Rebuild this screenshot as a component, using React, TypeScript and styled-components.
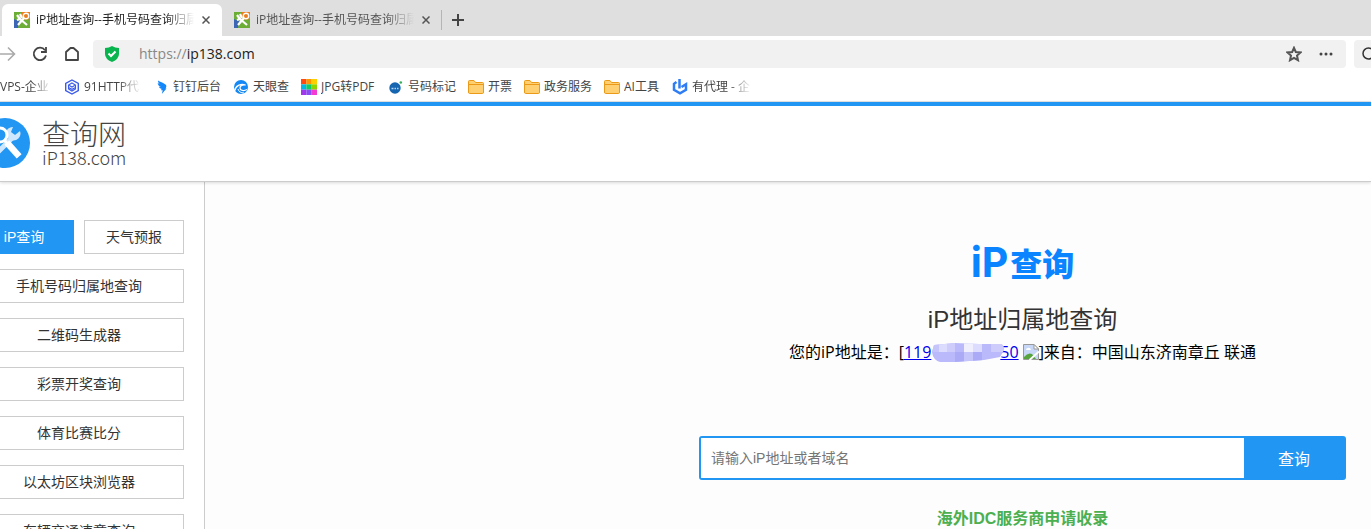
import React from 'react';
import styled, { createGlobalStyle } from 'styled-components';

const GlobalStyle = createGlobalStyle`
  *, *::before, *::after { box-sizing: border-box; }
  body {
    margin: 0;
    background: #fff;
    color: #333;
    font-family: "Open Sans", "Noto Sans CJK SC", sans-serif;
    font-size: 14px;
  }
  button, input { font-family: inherit; }
  button { border: 0; padding: 0; background: none; cursor: pointer; }
  svg { display: block; flex: none; }
`;

const Shell = styled.div`
  display: flex;
  flex-direction: column;
  height: 100vh;
  overflow: hidden;
`;

/* Browser frame */

const TabBar = styled.div`
  display: flex;
  align-items: flex-end;
  height: 36px;
  padding-left: 2px;
  background: #dfdfdf;
`;

const Tab = styled.div<{ $active?: boolean }>`
  display: flex;
  align-items: center;
  width: 220px;
  height: 32px;
  padding: 0 8px 0 12px;
  border-radius: 6px 6px 0 0;
  background: ${(p) => (p.$active ? '#fff' : 'transparent')};
  color: ${(p) => (p.$active ? '#222' : '#555')};
`;

const TabTitle = styled.span`
  flex: 1;
  margin-left: 6px;
  overflow: hidden;
  white-space: nowrap;
  font-size: 12px;
  line-height: 20px;
  mask-image: linear-gradient(to right, #000 82%, transparent);
`;

const TabClose = styled.button`
  display: grid;
  place-items: center;
  width: 16px;
  height: 16px;
  margin-left: 4px;
`;

const NewTab = styled.button`
  display: grid;
  place-items: center;
  width: 32px;
  height: 20px;
  margin: 0 0 6px -1px;
  border-left: 1px solid #b5b5b5;
`;

const NavBar = styled.div`
  display: flex;
  align-items: center;
  height: 36px;
  overflow: hidden;
`;

const NavButton = styled.button`
  display: grid;
  place-items: center;
  width: 32px;
  height: 32px;
  flex: none;
`;

const NavButtons = styled.div`
  display: flex;
  width: 93px;
  padding-right: 5px;
  justify-content: flex-end;
  flex: none;
`;

const AddressBox = styled.div`
  display: flex;
  flex: 1;
  align-items: center;
  height: 28px;
  padding: 0 4px 0 11px;
  border-radius: 4px;
  background: #f1f1f1;
`;

const Address = styled.div`
  flex: 1;
  margin-left: 19px;
  color: #222;
  font-size: 14px;
  line-height: 20px;
`;

const Scheme = styled.span`
  color: #888;
`;

const SearchStub = styled.div`
  display: flex;
  align-items: center;
  width: 17px;
  height: 28px;
  margin-left: 8px;
  padding-left: 8px;
  border-radius: 4px 0 0 4px;
  background: #f1f1f1;
  overflow: hidden;
`;

const Bookmarks = styled.nav`
  display: flex;
  align-items: center;
  gap: 12px;
  height: 30px;
  border-bottom: 1px solid #e3e3e3;
`;

const Bookmark = styled.a`
  display: flex;
  align-items: center;
  gap: 4px;
  color: #444;
  font-size: 12px;
  line-height: 20px;
  text-decoration: none;
`;

const BookmarkLabel = styled.span<{ $width: number; $fade?: boolean }>`
  width: ${(p) => p.$width}px;
  overflow: hidden;
  white-space: nowrap;
  ${(p) => p.$fade && 'mask-image: linear-gradient(to right, #000 60%, transparent);'}
`;

/* Site */

const SiteHeader = styled.header`
  position: relative;
  display: flex;
  align-items: center;
  flex: none;
  height: 80px;
  padding-bottom: 2px;
  border-top: 4px solid #2196f3;
  border-bottom: 1px solid #ccc;
  box-shadow: 0 1px 3px rgba(0, 0, 0, 0.14);
  background: #fff;
`;

const Brand = styled.a`
  display: flex;
  align-items: center;
  gap: 11px;
  margin-left: -20px;
  color: #444;
  text-decoration: none;
  font-family: "Noto Sans CJK SC", sans-serif;
  font-weight: 300;
`;

const BrandText = styled.span`
  display: flex;
  flex-direction: column;
`;

const BrandName = styled.span`
  font-size: 28px;
  line-height: 28px;
`;

const BrandDomain = styled.span`
  font-size: 18px;
  line-height: 20px;
`;

const Body = styled.div`
  display: flex;
  flex: 1;
  min-height: 0;
`;

const Sidebar = styled.aside`
  display: flex;
  justify-content: flex-end;
  flex: none;
  width: 205px;
  padding: 38px 20px 0 0;
  border-right: 1px solid #ccc;
  overflow: hidden;
`;

const Menu = styled.nav`
  display: grid;
  grid-template-columns: 100px 100px;
  grid-auto-rows: 34px;
  gap: 15px 10px;
  flex: none;
`;

const MenuLink = styled.a<{ $wide?: boolean; $active?: boolean }>`
  grid-column: ${(p) => (p.$wide ? 'span 2' : 'auto')};
  border: 1px solid ${(p) => (p.$active ? '#2196f3' : '#ccc')};
  background: ${(p) => (p.$active ? '#2196f3' : '#fff')};
  color: ${(p) => (p.$active ? '#fff' : '#333')};
  font-family: "Liberation Sans", "Noto Sans CJK SC", sans-serif;
  font-size: 14px;
  line-height: 32px;
  text-align: center;
  text-decoration: none;
`;

const Main = styled.main`
  display: flex;
  justify-content: flex-end;
  flex: 1;
  padding: 60px 25px 0;
  background: #fdfdfd;
`;

const Lookup = styled.section`
  display: flex;
  flex-direction: column;
  align-items: center;
  width: 647px;
`;

const Wordmark = styled.div`
  display: flex;
  align-items: center;
  gap: 2px;
  height: 40px;
  color: #0a84ff;
  font-family: Inter, Roboto, sans-serif;
  font-size: 41px;
  font-weight: 700;
  line-height: 40px;
`;

const WordmarkHan = styled.span`
  font-family: "Noto Sans CJK SC", sans-serif;
  font-size: 32px;
  font-weight: 900;
  line-height: 38px;
`;

const Title = styled.h1`
  margin: 22px 0 4px;
  font-family: "Liberation Sans", "Noto Sans CJK SC", sans-serif;
  font-size: 24px;
  font-weight: 400;
  line-height: 32px;
`;

const Result = styled.p`
  display: flex;
  align-items: center;
  margin: 0;
  color: #000;
  font-size: 16px;
  line-height: 24px;
  white-space: pre;
`;

const IpLink = styled.a`
  position: relative;
  display: flex;
  margin-right: 4px;
  color: #00e;
  text-decoration: underline;
`;

const HiddenDigits = styled.span`
  width: 69px;
`;

const Mosaic = styled.svg`
  position: absolute;
  left: 27px;
  top: 3px;
`;

const SearchForm = styled.form`
  display: flex;
  flex: none;
  width: 100%;
  height: 44px;
  margin: 72px 0 27px;
  border: 2px solid #2196f3;
  border-radius: 3px;
  background: #2196f3;
`;

const SearchInput = styled.input`
  flex: 1;
  min-width: 0;
  padding: 0 10px;
  border: 0;
  outline: 0;
  background: #fff;
  font-family: "Liberation Sans", "Noto Sans CJK SC", sans-serif;
  font-size: 14px;
  &::placeholder { color: #757575; opacity: 1; }
`;

const SearchButton = styled.button`
  width: 100px;
  color: #fff;
  font-size: 16px;
`;

const Notice = styled.a`
  color: #4caf50;
  font-family: "Liberation Sans", "Noto Sans CJK SC", sans-serif;
  font-size: 16px;
  font-weight: 700;
  line-height: 24px;
  text-decoration: none;
`;

/* Icons */

const SiteIcon = () => (
  <svg width="16" height="16" viewBox="0 0 16 16">
    <path d="M0 0h16v16H0z" fill="#6cae35" />
    <path d="M0 7l5 2-1 7H0z" fill="#3d65b5" />
    <path d="M8 0h8v7l-5 1-4-4z" fill="#ec7d1c" />
    <circle cx="12" cy="4" r="2.7" fill="#ec7d1c" stroke="#fff" strokeWidth="1.4" />
    <path d="M3 3l3 4-3 1M6 7l7 6M10 6l-6 7M6 2l2 4" stroke="#fff" strokeWidth="2.2" fill="none" />
  </svg>
);

const CloseIcon = () => (
  <svg width="8" height="8" viewBox="0 0 8 8" stroke="#555" strokeWidth="1.5">
    <path d="M.5.5l7 7M7.500.5l-7 7" />
  </svg>
);

const Folder = () => (
  <svg width="16" height="16" viewBox="0 0 16 16" fill="#ffd071" stroke="#eb9a17">
    <path d="M.5 13V2.500Q.5 1.500 1.500 1.500H6l1.500 2h7q1 0 1 1V13q0 1.500-1 1.500h-13q-1 0-1-1.500z" />
    <path d="M1 5.500h14" />
  </svg>
);

const HexIcon = () => (
  <svg width="16" height="16" viewBox="0 0 16 16" fill="none" stroke="#3b5bea">
    <path d="M8 1l6.300 3.500v7L8 15l-6.300-3.500v-7z" strokeWidth="1.400" />
    <path d="M8 4l3.500 2v4L8 12l-3.500-2V6zM4.500 6L8 8l3.500-2M4.500 8.500L8 10.300l3.500-1.800" strokeWidth="1.100" />
  </svg>
);

const WingIcon = () => (
  <svg width="16" height="16" viewBox="0 0 16 16" fill="#1487fa">
    <path d="M5 1.500c2 1.300 5 2.200 7.500 4 1.500 1.200.8 2.500 0 4h1L8.800 15l.9-3.700H8l.6-1.500C7 9.500 6.300 8.800 6 7.800l2 .3C5.500 7 4.800 5.500 4.700 4l2 .9C5.500 4 5 3 5 1.500z" />
  </svg>
);

const EyeIcon = () => (
  <svg width="16" height="16" viewBox="0 0 16 16">
    <circle cx="8" cy="8" r="7" fill="#1488f5" />
    <path d="M1.500 12c1-5 6-8 11-6-4-.3-5.500 1-5.500 3 0 2.500 3.500 3.500 7 1.500" fill="none" stroke="#fff" strokeWidth="1.300" />
    <path d="M5 10c.5 2.500 3 4 6 4" fill="none" stroke="#fff" />
  </svg>
);

const PaletteIcon = () => {
  const colours = ['#ff4b12', '#ff9500', '#ffd000', '#00b8e6', '#10cc62', '#8ed500', '#a038ec', '#8a4cf5', '#f33bd3'];
  return (
    <svg width="16" height="16" viewBox="0 0 15 15">
      {colours.map((c, i) => (
        <rect key={c} x={(i % 3) * 5} y={Math.floor(i / 3) * 5} width="5" height="5" fill={c} />
      ))}
    </svg>
  );
};

const MarkIcon = () => (
  <svg width="16" height="16" viewBox="0 0 16 16">
    <circle cx="7" cy="9" r="5.700" fill="#1565b0" />
    <path d="M3.500 9.500h2M6.500 9.500h1.500M9 9.500h1.500" stroke="#b4d3f0" strokeWidth="1.300" />
    <circle cx="12.800" cy="3.500" r="1.300" fill="#37ae5b" />
  </svg>
);

const PowerIcon = () => (
  <svg width="16" height="16" viewBox="0 0 16 16" fill="none" stroke="#2f7df5" strokeWidth="2.500">
    <path d="M4.500 3L2 4.800v6L8 14.300l6-3.500V5.200L9.500 8M7.500 0v9.500" />
  </svg>
);

const BrokenImage = () => (
  <svg width="16" height="16" viewBox="0 0 16 16" role="img" aria-label="图片">
    <path d="M.5.5H11l4.500 4.500v10.500H.5z" fill="#c6d7f7" stroke="#999" />
    <path d="M11 .5V5h4.500z" fill="#fff" stroke="#999" />
    <path d="M3 6q0-2 2-2 2-1 3 2z" fill="#fff" />
    <path d="M1 15v-2q4-5 8-3l4 5z" fill="#55a43c" />
    <path d="M16 7.500L6.500 16" stroke="#fdfdfd" strokeWidth="2" />
  </svg>
);

const ToolsLogo = () => (
  <svg width="51" height="50" viewBox="0 0 51 50">
    <circle cx="25" cy="25" r="25" fill="#2196f3" />
    <path d="M15 37l18-18" stroke="#cfe7fc" strokeWidth="5" strokeLinecap="round" />
    <path d="M38 10a7 7 0 0 0-7 9l5 4a7 7 0 0 0 9-9l-5 4-4-3z" transform="translate(-5 -1)" fill="#cfe7fc" />
    <circle cx="20" cy="17" r="7" fill="#2196f3" stroke="#fff" strokeWidth="3" />
    <path d="M24 22l5 5" stroke="#fff" strokeWidth="3" />
    <path d="M29 27l8 9" stroke="#fff" strokeWidth="6.500" strokeLinecap="square" />
  </svg>
);

type Mark = { label: string; width: number; fade?: boolean; icon?: React.ReactNode };

const bookmarks: Mark[] = [
  { label: 'VPS-企业', width: 52, fade: true },
  { label: '91HTTP代', width: 57, fade: true, icon: <HexIcon /> },
  { label: '钉钉后台', width: 48, icon: <WingIcon /> },
  { label: '天眼查', width: 36, icon: <EyeIcon /> },
  { label: 'JPG转PDF', width: 55, icon: <PaletteIcon /> },
  { label: '号码标记', width: 48, icon: <MarkIcon /> },
  { label: '开票', width: 24, icon: <Folder /> },
  { label: '政务服务', width: 48, icon: <Folder /> },
  { label: 'AI工具', width: 36, icon: <Folder /> },
  { label: '有代理 - 企', width: 60, fade: true, icon: <PowerIcon /> },
];

const services = ['手机号码归属地查询', '二维码生成器', '彩票开奖查询', '体育比赛比分', '以太坊区块浏览器', '车辆交通违章查询'];

export default function App() {
  return (
    <Shell>
      <GlobalStyle />
      <TabBar>
        {[true, false].map((active) => (
          <Tab key={String(active)} $active={active}>
            <SiteIcon />
            <TabTitle>iP地址查询--手机号码查询归属</TabTitle>
            <TabClose aria-label="关闭标签页"><CloseIcon /></TabClose>
          </Tab>
        ))}
        <NewTab aria-label="新建标签页">
          <svg width="12" height="12" viewBox="0 0 12 12" stroke="#444" strokeWidth="2"><path d="M6 0v12M0 6h12" /></svg>
        </NewTab>
      </TabBar>

      <NavBar>
        <NavButtons>
          <NavButton aria-label="前进">
            <svg width="16" height="16" viewBox="0 0 16 16" fill="none" stroke="#aaa" strokeWidth="1.600"><path d="M0 8h14M8 1.500L14.500 8 8 14.500" /></svg>
          </NavButton>
          <NavButton aria-label="刷新">
            <svg width="16" height="16" viewBox="0 0 16 16" fill="none" stroke="#444" strokeWidth="1.800"><path d="M13 4.200A6.200 6.200 0 1 0 14 9.500M14 1v5H9" /></svg>
          </NavButton>
          <NavButton aria-label="主页">
            <svg width="16" height="16" viewBox="0 0 16 16" fill="none" stroke="#444" strokeWidth="1.800"><path d="M2 6l4.500-4h3L14 6v8H2z" strokeLinejoin="round" /></svg>
          </NavButton>
        </NavButtons>
        <AddressBox>
          <svg width="16" height="16" viewBox="0 0 16 16"><path d="M8 0q3 2 7 2v6q0 5-7 8-7-3-7-8V2q4 0 7-2z" fill="#08b44e" /><path d="M4.500 7.500L7 10l4.500-4.500" fill="none" stroke="#fff" strokeWidth="2" /></svg>
          <Address><Scheme>https://</Scheme>ip138.com</Address>
          <NavButton aria-label="收藏">
            <svg width="16" height="16" viewBox="0 0 16 16" fill="none" stroke="#555" strokeWidth="2"><path d="M8 1.800l1.800 4.200 4.700.4-3.500 3.100 1 4.700L8 11.800l-4 2.400 1-4.700-3.500-3.100 4.700-.4z" /></svg>
          </NavButton>
          <NavButton aria-label="更多">
            <svg width="14" height="4" viewBox="0 0 14 4" fill="#444"><circle cx="2" cy="2" r="1.500" /><circle cx="7" cy="2" r="1.500" /><circle cx="12" cy="2" r="1.500" /></svg>
          </NavButton>
        </AddressBox>
        <SearchStub>
          <svg width="14" height="14" viewBox="0 0 14 14" fill="none" stroke="#333" strokeWidth="1.500"><circle cx="6.500" cy="6.500" r="5.500" /><path d="M10.500 10.500L14 14" /></svg>
        </SearchStub>
      </NavBar>

      <Bookmarks>
        {bookmarks.map((b) => (
          <Bookmark key={b.label} href="#">
            {b.icon}
            <BookmarkLabel $width={b.width} $fade={b.fade}>{b.label}</BookmarkLabel>
          </Bookmark>
        ))}
      </Bookmarks>

      <SiteHeader>
        <Brand href="#">
          <ToolsLogo />
          <BrandText>
            <BrandName>查询网</BrandName>
            <BrandDomain>iP138.com</BrandDomain>
          </BrandText>
        </Brand>
      </SiteHeader>

      <Body>
        <Sidebar>
          <Menu>
            <MenuLink href="#" $active>iP查询</MenuLink>
            <MenuLink href="#">天气预报</MenuLink>
            {services.map((s) => (
              <MenuLink key={s} href="#" $wide>{s}</MenuLink>
            ))}
          </Menu>
        </Sidebar>
        <Main>
          <Lookup>
            <Wordmark>iP<WordmarkHan>查询</WordmarkHan></Wordmark>
            <Title>iP地址归属地查询</Title>
            <Result>
              您的iP地址是：[
              <IpLink href="#">
                119<HiddenDigits />50
                <Mosaic width="73" height="19" viewBox="0 0 73 19">
                  <clipPath id="smudge"><path d="M3 2L24 0l24 1 22 0q3 1 3 6l-4 7-16 3-30 2H9Q2 17 1 9z" /></clipPath>
                  <g clipPath="url(#smudge)">
                    <path d="M0 0h73v19H0z" fill="#b9b9fb" />
                    <path d="M8 0h8v9H8zM42 0h9v9h-9z" fill="#dcdcfe" />
                    <path d="M33 0h9v9h-9z" fill="#efeffe" />
                    <path d="M60 0h13v9H60zM16 0h8v9h-8z" fill="#ceccfa" />
                    <path d="M24 9h9v10h-9zM42 9h9v10h-9z" fill="#aaaaf7" />
                    <path d="M33 9h9v10h-9zM0 0h8v9H0z" fill="#c5c5fc" />
                  </g>
                </Mosaic>
              </IpLink>
              <BrokenImage />
              ]来自：中国山东济南章丘 联通
            </Result>
            <SearchForm onSubmit={(e) => e.preventDefault()}>
              <SearchInput aria-label="iP地址或者域名" placeholder="请输入iP地址或者域名" />
              <SearchButton type="submit">查询</SearchButton>
            </SearchForm>
            <Notice href="#">海外IDC服务商申请收录</Notice>
          </Lookup>
        </Main>
      </Body>
    </Shell>
  );
}
